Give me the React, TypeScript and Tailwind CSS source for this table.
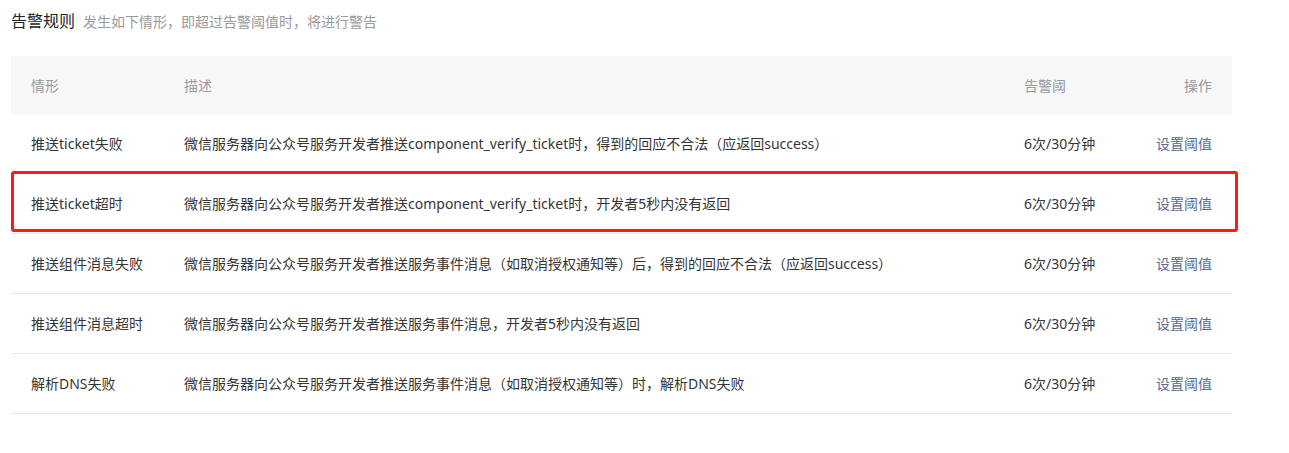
const rules = [
  {
    name: "推送ticket失败",
    desc: "微信服务器向公众号服务开发者推送component_verify_ticket时，得到的回应不合法（应返回success）",
  },
  {
    name: "推送ticket超时",
    desc: "微信服务器向公众号服务开发者推送component_verify_ticket时，开发者5秒内没有返回",
    marked: true,
  },
  {
    name: "推送组件消息失败",
    desc: "微信服务器向公众号服务开发者推送服务事件消息（如取消授权通知等）后，得到的回应不合法（应返回success）",
  },
  {
    name: "推送组件消息超时",
    desc: "微信服务器向公众号服务开发者推送服务事件消息，开发者5秒内没有返回",
  },
  {
    name: "解析DNS失败",
    desc: "微信服务器向公众号服务开发者推送服务事件消息（如取消授权通知等）时，解析DNS失败",
  },
];

const cols = "grid grid-cols-[173px_840px_1fr_120px] items-center";

export default function App() {
  return (
    <main className="min-h-[453px] w-[1289px] bg-white pl-[11px] pt-[10px] font-['Noto_Sans','Noto_Sans_CJK_SC',sans-serif] text-[14px] text-[#353535]">
      <div className="flex h-[22px] items-center gap-[8px]">
        <h2 className="text-[16px] font-normal text-[#222]">告警规则</h2>
        <span className="text-[14px] text-[#9a9a9a]">发生如下情形，即超过告警阈值时，将进行警告</span>
      </div>

      <div className="mt-[24px] w-[1221px]">
        <div className={`${cols} h-[58px] bg-[#f6f7f9] text-[#9a9a9a]`}>
          <div className="pl-5">情形</div>
          <div>描述</div>
          <div>告警阈</div>
          <div className="pr-5 text-right">操作</div>
        </div>

        {rules.map((r) => (
          <div
            key={r.name}
            className={`${cols} relative h-[60px] border-b border-[#e7e7e7]`}
          >
            <div className="pl-5">{r.name}</div>
            <div>{r.desc}</div>
            <div>6次/30分钟</div>
            <div className="pr-5 text-right">
              <a href="#" className="text-[#576b95]">设置阈值</a>
            </div>
            {r.marked && (
              <div className="pointer-events-none absolute -top-[3px] left-0 -right-[6px] bottom-[1px] rounded-[3px] border-[3px] border-[#ff1a1a]" />
            )}
          </div>
        ))}
      </div>
    </main>
  );
}
